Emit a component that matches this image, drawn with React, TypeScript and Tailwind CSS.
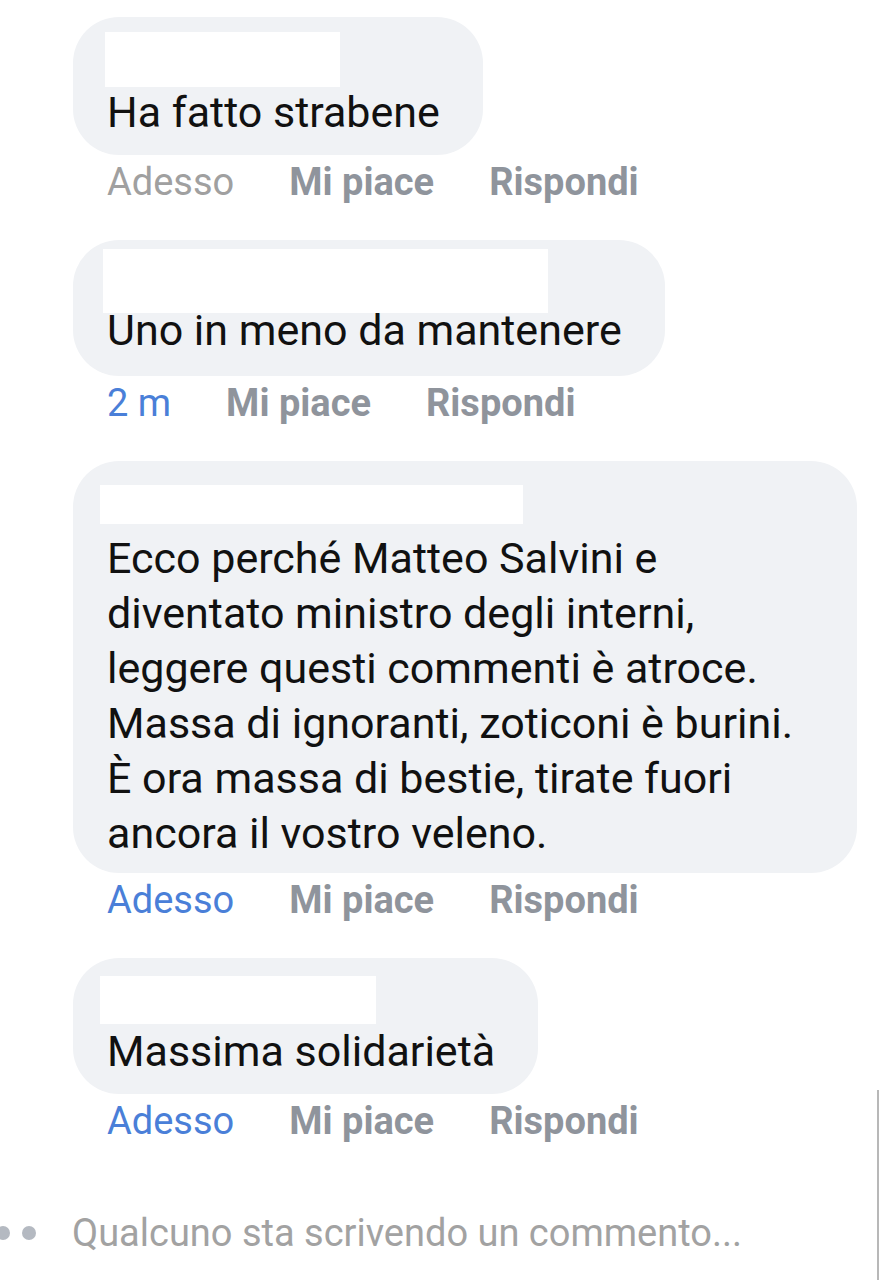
type Comment = {
  lines: string[];
  bubble: string;
  mask: string;
  time: string;
  timeTone: "gray" | "blue";
};

const comments: Comment[] = [
  {
    lines: ["Ha fatto strabene"],
    bubble: "w-[410px] pt-[68px] pb-[15px]",
    mask: "left-[32px] top-[15px] w-[235px] h-[55px]",
    time: "Adesso",
    timeTone: "gray",
  },
  {
    lines: ["Uno in meno da mantenere"],
    bubble: "w-[592px] pt-[63px] pb-[18px]",
    mask: "left-[30px] top-[9px] w-[445px] h-[64px]",
    time: "2 m",
    timeTone: "blue",
  },
  {
    lines: [
      "Ecco perché Matteo Salvini e",
      "diventato ministro degli interni,",
      "leggere questi commenti è atroce.",
      "Massa di ignoranti, zoticoni è burini.",
      "È ora massa di bestie, tirate fuori",
      "ancora il vostro veleno.",
    ],
    bubble: "w-[784px] pt-[70px] pb-[12px]",
    mask: "left-[27px] top-[24px] w-[423px] h-[39px]",
    time: "Adesso",
    timeTone: "blue",
  },
  {
    lines: ["Massima solidarietà"],
    bubble: "w-[465px] pt-[66px] pb-[15px]",
    mask: "left-[27px] top-[18px] w-[276px] h-[48px]",
    time: "Adesso",
    timeTone: "blue",
  },
];

function CommentItem({ c }: { c: Comment }) {
  return (
    <div className="flex flex-col mb-[36px]">
      <div
        className={`relative rounded-[46px] bg-[#f0f2f5] pl-[34px] text-[43px] leading-[55px] text-[#111111] ${c.bubble}`}
      >
        {/* hidden author name */}
        <div className={`absolute bg-white ${c.mask}`} />
        {c.lines.map((l, i) => (
          <div key={i} className="whitespace-nowrap">
            {l}
          </div>
        ))}
      </div>
      <div className="mt-[5px] flex items-center gap-[55px] pl-[34px] text-[38px] leading-[44px]">
        <span
          className={
            c.timeTone === "blue" ? "text-[#4a7fd8]" : "text-[#a0a0a0]"
          }
        >
          {c.time}
        </span>
        <span className="font-bold text-[#8f949c]">Mi piace</span>
        <span className="font-bold text-[#8f949c]">Rispondi</span>
      </div>
    </div>
  );
}

export default function App() {
  return (
    <div className="relative h-[1280px] w-[880px] overflow-hidden bg-white font-[Roboto,sans-serif]">
      <div className="flex flex-col pl-[73px] pt-[17px]">
        {comments.map((c, i) => (
          <CommentItem key={i} c={c} />
        ))}
      </div>

      <div className="mt-[32px] flex items-center">
        <div className="ml-[-4px] flex gap-[12px]">
          <span className="h-[14px] w-[14px] rounded-full bg-[#b4b9c1]" />
          <span className="h-[14px] w-[14px] rounded-full bg-[#b4b9c1]" />
        </div>
        <span className="ml-[36px] text-[38px] leading-[44px] text-[#a2a2a2]">
          Qualcuno sta scrivendo un commento...
        </span>
      </div>

      <div className="absolute right-[1px] top-[1090px] bottom-0 w-[2px] bg-[#b8b8b8]" />
    </div>
  );
}
